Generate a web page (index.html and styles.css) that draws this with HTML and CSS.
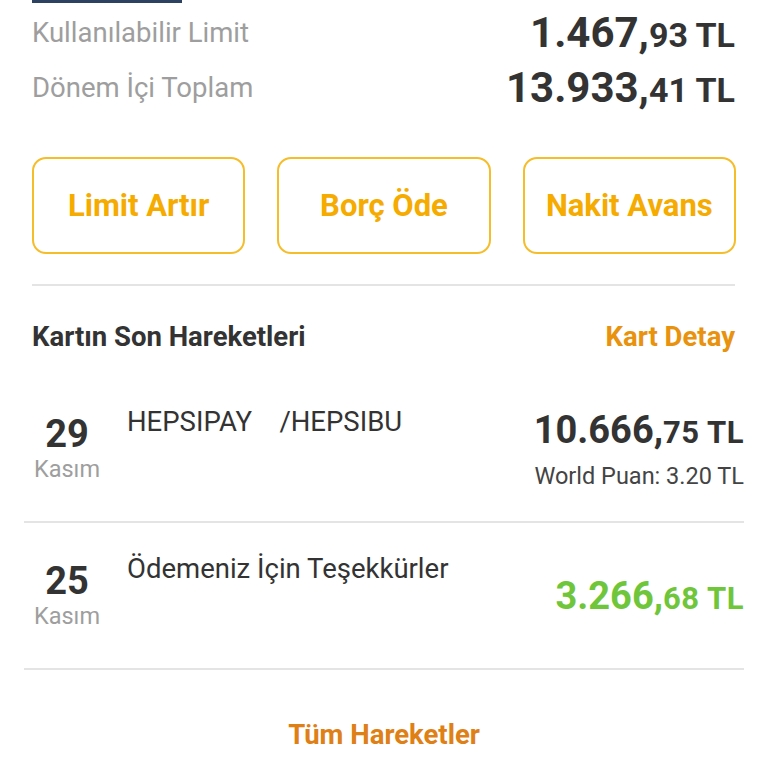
FILE: index.html
```html
<!DOCTYPE html>
<html lang="tr">
<head>
    <meta charset="UTF-8">
    <meta name="viewport" content="width=device-width, initial-scale=1.0">
    <title>Kart Özeti</title>
    <link rel="stylesheet" href="styles.css">
</head>
<body>
    <div class="card-strip"></div>

    <section class="summary">
        <div class="summary-row">
            <span class="summary-label">Kullanılabilir Limit</span>
            <span class="amount"><span class="amount-main">1.467,</span><span class="amount-rest">93 TL</span></span>
        </div>
        <div class="summary-row">
            <span class="summary-label">Dönem İçi Toplam</span>
            <span class="amount"><span class="amount-main">13.933,</span><span class="amount-rest">41 TL</span></span>
        </div>
    </section>

    <div class="actions">
        <button class="action-btn">Limit Artır</button>
        <button class="action-btn">Borç Öde</button>
        <button class="action-btn">Nakit Avans</button>
    </div>

    <div class="divider"></div>

    <div class="recent-head">
        <h2>Kartın Son Hareketleri</h2>
        <a href="#" class="link-detail">Kart Detay</a>
    </div>

    <ul class="tx-list">
        <li class="tx-item">
            <div class="tx-date">
                <span class="tx-day">29</span>
                <span class="tx-month">Kasım</span>
            </div>
            <div class="tx-desc">HEPSIPAY&nbsp;&nbsp;&nbsp;&nbsp;/HEPSIBU</div>
            <div class="tx-right">
                <span class="tx-amount"><span class="amount-main">10.666,</span><span class="amount-rest">75 TL</span></span>
                <span class="tx-points">World Puan: 3.20 TL</span>
            </div>
        </li>
        <li class="tx-item">
            <div class="tx-date">
                <span class="tx-day">25</span>
                <span class="tx-month">Kasım</span>
            </div>
            <div class="tx-desc">Ödemeniz İçin Teşekkürler</div>
            <div class="tx-right">
                <span class="tx-amount income"><span class="amount-main">3.266,</span><span class="amount-rest">68 TL</span></span>
            </div>
        </li>
    </ul>

    <div class="all-wrap">
        <a href="#" class="link-all">Tüm Hareketler</a>
    </div>
</body>
</html>
```

FILE: styles.css
```css
body {
    margin: 0;
    padding: 0;
    background: #ffffff;
    font-family: Roboto, "Liberation Sans", sans-serif;
    color: #333333;
}

.card-strip {
    width: 150px;
    height: 3px;
    margin-left: 32px;
    background: #2d4160;
}

.summary {
    padding: 2px 33px 0 32px;
}

.summary-row {
    display: flex;
    justify-content: space-between;
    align-items: center;
    height: 55px;
}

.summary-label {
    font-size: 27.5px;
    color: #9e9e9e;
}

.amount {
    font-weight: 700;
    color: #333333;
    white-space: nowrap;
}

.amount .amount-main {
    font-size: 42px;
}

.amount .amount-rest {
    font-size: 34px;
}

.actions {
    display: flex;
    gap: 32px;
    padding: 0 32px;
    margin-top: 42px;
}

.action-btn {
    flex: 1;
    height: 97px;
    background: #ffffff;
    border: 2px solid #f6bd2a;
    border-radius: 14px;
    font-family: Roboto, "Liberation Sans", sans-serif;
    font-size: 31px;
    font-weight: 700;
    color: #f5ab00;
    cursor: pointer;
}

.divider {
    height: 2px;
    margin: 30px 33px 0 32px;
    background: #e4e4e4;
}

.recent-head {
    display: flex;
    justify-content: space-between;
    align-items: center;
    height: 80px;
    padding: 10px 33px 0 32px;
}

.recent-head h2 {
    margin: 0;
    font-size: 27.5px;
    font-weight: 700;
    color: #333333;
}

.link-detail {
    font-size: 27.5px;
    font-weight: 700;
    color: #e8920e;
    text-decoration: none;
}

.tx-list {
    list-style: none;
    margin: 0 24px;
    padding: 0;
}

.tx-item {
    display: flex;
    align-items: center;
    height: 145px;
    border-bottom: 2px solid #e4e4e4;
}

.tx-date {
    display: flex;
    flex-direction: column;
    align-items: center;
    width: 86px;
}

.tx-day {
    font-size: 38px;
    font-weight: 700;
    line-height: 40px;
}

.tx-month {
    font-size: 23.5px;
    color: #9e9e9e;
    line-height: 30px;
}

.tx-desc {
    flex: 1;
    align-self: flex-start;
    margin-top: 29px;
    padding-left: 17px;
    font-size: 27.5px;
    color: #333333;
}

.tx-right {
    display: flex;
    flex-direction: column;
    align-items: flex-end;
    gap: 10px;
}

.tx-amount {
    font-weight: 700;
    white-space: nowrap;
}

.tx-amount .amount-main {
    font-size: 38px;
}

.tx-amount .amount-rest {
    font-size: 31px;
    letter-spacing: 0.5px;
}

.tx-amount.income {
    color: #6fc63a;
}

.tx-points {
    font-size: 23.5px;
    color: #444444;
}

.all-wrap {
    text-align: center;
    padding-top: 48px;
}

.link-all {
    font-size: 27.5px;
    font-weight: 700;
    color: #df8016;
    text-decoration: none;
}
```
